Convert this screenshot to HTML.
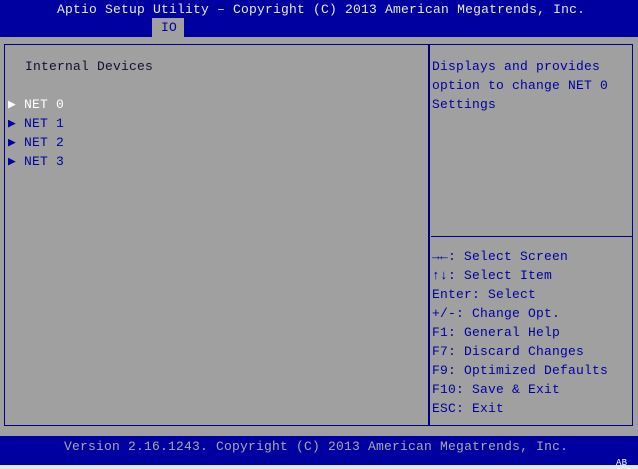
<!DOCTYPE html>
<html><head><style>
body{margin:0;width:638px;height:469px;background:#a0a0a0;position:relative;overflow:hidden;font-family:"Liberation Mono","DejaVu Sans Mono",monospace;font-size:13px;letter-spacing:0.2px;}
div{position:absolute;white-space:pre;}
.top{left:0;top:0;width:638px;height:37px;background:#0000a0;}
.bot{left:0;top:436px;width:638px;height:29px;background:#0000a0;}
.strip{left:0;top:465px;width:638px;height:4px;background:#e0e8f0;}
.t{color:#fff;line-height:19px;}
.g{color:#d0d0d0;line-height:19px;}
.b{color:#0000a0;line-height:19px;}
</style></head><body>
<div class="top"></div>
<div class="t" style="left:57px;top:0px;color:#e8e8e8">Aptio Setup Utility – Copyright (C) 2013 American Megatrends, Inc.</div>
<div style="left:152px;top:18px;width:32px;height:19px;background:#a0a0a0"></div>
<div class="b" style="left:161px;top:18px">IO</div>
<div style="left:4px;top:44px;width:627px;height:380px;border:1px solid #000080"></div>
<div style="left:428px;top:45px;width:1.5px;height:380px;background:#000080"></div>
<div style="left:431px;top:236px;width:201px;height:1px;background:#000080"></div>
<div class="b" style="left:25px;top:57px;color:#101030">Internal Devices</div>
<div class="t" style="left:8px;top:95px">▶ NET 0</div>
<div class="b" style="left:8px;top:114px">▶ NET 1
▶ NET 2
▶ NET 3</div>
<div class="b" style="left:432px;top:57px">Displays and provides
option to change NET 0
Settings</div>
<div class="b" style="left:432px;top:247px"><b>→←</b>: Select Screen
<b>↑↓</b>: Select Item
Enter: Select
+/-: Change Opt.
F1: General Help
F7: Discard Changes
F9: Optimized Defaults
F10: Save &amp; Exit
ESC: Exit</div>
<div class="bot"></div>
<div class="g" style="left:64px;top:437px;color:#a8a8a8">Version 2.16.1243. Copyright (C) 2013 American Megatrends, Inc.</div>
<div style="left:616px;top:458px;color:#fff;font-size:9px">AB</div>
<div class="strip"></div>
</body></html>
